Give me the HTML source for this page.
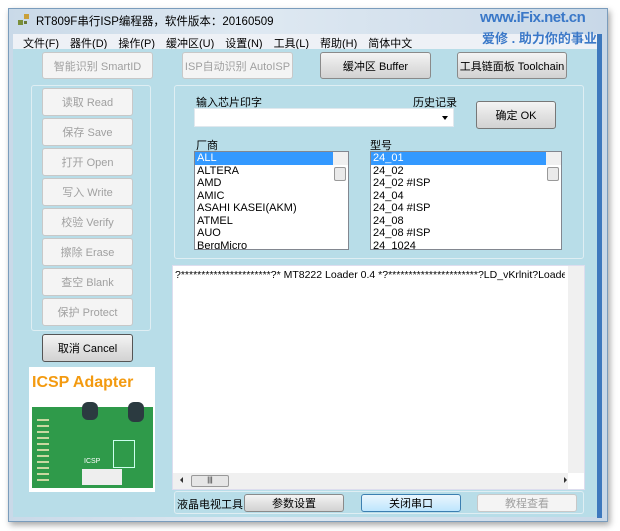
<!DOCTYPE html>
<html><head><meta charset="utf-8">
<style>
*{box-sizing:border-box;margin:0;padding:0}
body{width:620px;height:531px;background:#fff;position:relative;overflow:hidden;font-family:"Liberation Sans","Noto Sans CJK SC",sans-serif;font-size:11px;color:#000}
.a{position:absolute}
.btn{position:absolute;border:1px solid #8a8a8a;border-radius:3px;background:linear-gradient(#f4f4f4,#e2e2e2 50%,#d2d2d2);text-align:center;font-size:11px;display:flex;align-items:center;justify-content:center}
.dis{border-color:#c8c8c8;background:#f4f4f4;color:#a0a0a0}
.grp{position:absolute;border:1px solid #dfeef3;border-radius:3px}
.list{position:absolute;background:#fff;border:1px solid #828790;overflow:hidden;font-size:11px;line-height:12.5px}
.list div{padding-left:2px;height:12.5px;white-space:nowrap}
.sel{background:#3399ff;color:#fff}
.vs{position:absolute;right:0;top:0;bottom:0;width:15px;background:#f0f0f0}
</style></head><body>
<div class="a" style="left:8px;top:8px;width:600px;height:514px;background:#7a9cbc;box-shadow:2px 3px 6px rgba(0,0,0,.35)"></div>
<div class="a" style="left:9px;top:9px;width:598px;height:512px;background:linear-gradient(90deg,#c9d9e8,#dfe9f2 40%,#c8d8e8);"></div>
<div class="a" style="left:597px;top:34px;width:5px;height:484px;background:#3d78bd"></div>
<div class="a" style="left:18px;top:14px;width:12px;height:12px">
<div class="a" style="left:0;top:6px;width:5px;height:5px;background:#7a8f3a"></div>
<div class="a" style="left:6px;top:0;width:5px;height:5px;background:#c9a03a"></div>
<div class="a" style="left:6px;top:7px;width:3px;height:3px;background:#6a7a3a"></div>
</div>
<div class="a" style="left:36px;top:13px;font-size:11.5px">RT809F串行ISP编程器，软件版本：20160509</div>
<div class="a" style="left:13px;top:34px;width:584px;height:15px;background:#eef1f6"></div>
<div class="a" style="left:23px;top:35px;font-size:11px">
<span style="margin-right:11px">文件(F)</span><span style="margin-right:11px">器件(D)</span><span style="margin-right:11px">操作(P)</span><span style="margin-right:11px">缓冲区(U)</span><span style="margin-right:11px">设置(N)</span><span style="margin-right:11px">工具(L)</span><span style="margin-right:11px">帮助(H)</span><span>简体中文</span></div>
<div class="a" style="left:13px;top:49px;width:584px;height:468px;background:#b8dde8"></div>
<div class="a" style="left:480px;top:9px;color:#3a78c8;font-size:15px;font-weight:bold;letter-spacing:-0.5px">www.iFix.net.cn</div>
<div class="a" style="left:482px;top:28px;color:#3a78c8;font-size:13px;font-weight:bold">爱修 . 助力你的事业</div>
<div class="btn dis" style="left:42px;top:52px;width:111px;height:27px">智能识别 SmartID</div>
<div class="btn dis" style="left:182px;top:52px;width:111px;height:27px">ISP自动识别 AutoISP</div>
<div class="btn" style="left:320px;top:52px;width:111px;height:27px">缓冲区 Buffer</div>
<div class="btn" style="left:457px;top:52px;width:110px;height:27px">工具链面板 Toolchain</div>
<div class="grp" style="left:31px;top:85px;width:120px;height:246px"></div>
<div class="btn dis" style="left:42px;top:88px;width:91px;height:28px">读取 Read</div>
<div class="btn dis" style="left:42px;top:118px;width:91px;height:28px">保存 Save</div>
<div class="btn dis" style="left:42px;top:148px;width:91px;height:28px">打开 Open</div>
<div class="btn dis" style="left:42px;top:178px;width:91px;height:28px">写入 Write</div>
<div class="btn dis" style="left:42px;top:208px;width:91px;height:28px">校验 Verify</div>
<div class="btn dis" style="left:42px;top:238px;width:91px;height:28px">擦除 Erase</div>
<div class="btn dis" style="left:42px;top:268px;width:91px;height:28px">查空 Blank</div>
<div class="btn dis" style="left:42px;top:298px;width:91px;height:28px">保护 Protect</div>
<div class="btn" style="left:42px;top:334px;width:91px;height:28px;border-color:#555">取消 Cancel</div>
<div class="a" style="left:29px;top:367px;width:126px;height:125px;background:#fff"></div>
<div class="a" style="left:32px;top:374px;color:#f39a10;font-weight:bold;font-size:16px">ICSP Adapter</div>
<div class="a" style="left:32px;top:407px;width:121px;height:81px;background:#2f9a4a"></div>
<div class="a" style="left:37px;top:415px;width:12px;height:66px;background:repeating-linear-gradient(#2f9a4a 0 4px,#c9d8a0 4px 6px)"></div>
<div class="a" style="left:82px;top:402px;width:16px;height:18px;border-radius:6px;background:#2b3a40"></div>
<div class="a" style="left:128px;top:402px;width:16px;height:20px;border-radius:6px;background:#2b3a40"></div>
<div class="a" style="left:113px;top:440px;width:22px;height:28px;border:1px solid #cfe"></div>
<div class="a" style="left:82px;top:469px;width:40px;height:16px;background:#eee"></div>
<div class="a" style="left:84px;top:458px;color:#fff;font-size:7px">ICSP</div>
<div class="grp" style="left:174px;top:85px;width:410px;height:174px"></div>
<div class="a" style="left:196px;top:94px">输入芯片印字</div>
<div class="a" style="left:413px;top:94px">历史记录</div>
<div class="a" style="left:194px;top:108px;width:260px;height:19px;background:#fff;border:1px solid #e0e8ee"></div>
<div class="a" style="left:442px;top:116px;border:3px solid transparent;border-top:4px solid #000;width:0;height:0"></div>
<div class="btn" style="left:476px;top:101px;width:80px;height:28px;border-color:#777">确定 OK</div>
<div class="a" style="left:196px;top:137px">厂商</div>
<div class="a" style="left:370px;top:137px">型号</div>
<div class="list" style="left:194px;top:151px;width:155px;height:99px">
<div class="sel" style="width:138px">ALL</div><div>ALTERA</div><div>AMD</div><div>AMIC</div><div>ASAHI KASEI(AKM)</div><div>ATMEL</div><div>AUO</div><div>BergMicro</div>
<div class="vs"><div class="a" style="left:1px;top:15px;width:12px;height:14px;border:1px solid #999;background:#eaeaea;border-radius:2px"></div></div></div>
<div class="list" style="left:370px;top:151px;width:192px;height:99px">
<div class="sel" style="width:175px">24_01</div><div>24_02</div><div>24_02 #ISP</div><div>24_04</div><div>24_04 #ISP</div><div>24_08</div><div>24_08 #ISP</div><div>24_1024</div>
<div class="vs"><div class="a" style="left:1px;top:15px;width:12px;height:14px;border:1px solid #999;background:#eaeaea;border-radius:2px"></div></div></div>
<div class="a" style="left:172px;top:265px;width:413px;height:225px;background:#fff;border:1px solid #dde"></div>
<div class="a" style="left:175px;top:269px;white-space:nowrap;width:390px;overflow:hidden;font-size:10.5px">?**********************?* MT8222 Loader 0.4 *?**********************?LD_vKrlnit?Loader=</div>
<div class="a" style="left:568px;top:266px;width:16px;height:207px;background:#f0f0f0"></div>
<div class="a" style="left:173px;top:473px;width:395px;height:16px;background:#f0f0f0"></div>
<div class="a" style="left:191px;top:475px;width:38px;height:12px;border:1px solid #999;border-radius:2px;background:#e6e6e6;font-size:7px;text-align:center;line-height:10px">|||</div>
<div class="a" style="left:177px;top:477px;border:3px solid transparent;border-right:3px solid #333;width:0;height:0"></div>
<div class="a" style="left:564px;top:477px;border:3px solid transparent;border-left:3px solid #333;width:0;height:0"></div>
<div class="grp" style="left:174px;top:491px;width:410px;height:23px"></div>
<div class="a" style="left:177px;top:496px">液晶电视工具</div>
<div class="btn" style="left:244px;top:494px;width:100px;height:18px">参数设置</div>
<div class="btn" style="left:361px;top:494px;width:100px;height:18px;border-color:#3c7fb1;background:linear-gradient(#eaf6fd,#bee6fd)">关闭串口</div>
<div class="btn dis" style="left:477px;top:494px;width:100px;height:18px">教程查看</div>
</body></html>
